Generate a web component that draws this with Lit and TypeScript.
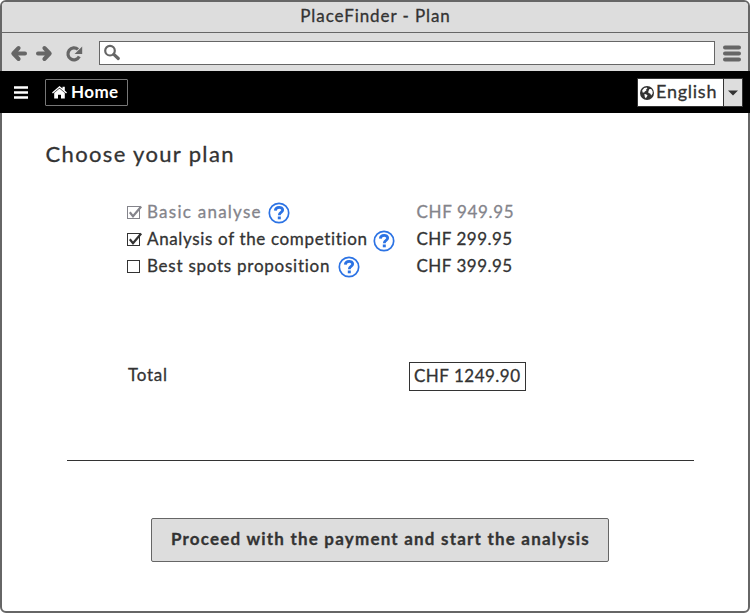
import { LitElement, html, css, svg } from "lit";
import { customElement } from "lit/decorators.js";

interface Option { label: string; price: string; checked: boolean; cls: string; }

const OPTIONS: Option[] = [
  { label: "Basic analyse", price: "CHF 949.95", checked: true, cls: "basic" },
  { label: "Analysis of the competition", price: "CHF 299.95", checked: true, cls: "competition" },
  { label: "Best spots proposition", price: "CHF 399.95", checked: false, cls: "spots" },
];

const arrow = svg`<path d="M7.6 2 L2.3 7.5 L7.6 13 M3 7.5 H14" fill="none" stroke="#666" stroke-width="4" stroke-linecap="round" stroke-linejoin="round"/>`;

@customElement("app-root")
export class AppRoot extends LitElement {
  static styles = css`
    :host { display: block; width: 750px; height: 613px; font-family: Lato, "Liberation Sans", sans-serif; font-size: 17px; line-height: 20px; color: #333; background: #fff; }
    * { box-sizing: border-box; }
    svg { display: block; flex: none; overflow: visible; }
    span { white-space: nowrap; -webkit-text-stroke: 0.3px currentColor; font-variant-ligatures: none; }
    .window { width: 750px; height: 613px; border: 2px solid #666; border-radius: 6px; background: #fff; }
    .chrome { background: #ddd; height: 69px; border-radius: 4px 4px 0 0; }
    .title { height: 31px; border-bottom: 1px solid #666; display: flex; align-items: center; justify-content: center; padding: 0 0 3px 1px; letter-spacing: .92px; }
    .toolbar { height: 38px; display: flex; align-items: center; padding: 2px 7px 0 9px; }
    .toolbar .fwd { margin-left: 9px; }
    .toolbar .reload { margin-left: 14px; }
    .address { width: 616px; height: 24px; margin-left: 17px; margin-right: 8px; border: 1px solid #666; background: #fff; display: flex; align-items: center; padding: 0 0 1px 4px; }
    .nav { height: 42px; margin: 0 -2px; background: #000; display: flex; align-items: center; padding: 0 7px 0 14px; }
    .burger { margin-top: 1px; }
    .home { margin-left: 17px; width: 83px; height: 27px; border: 1px solid #777; border-radius: 1px; color: #fff; display: flex; align-items: center; padding-left: 6px; gap: 4px; font-weight: 700; letter-spacing: .4px; }
    .home span { -webkit-text-stroke: 0; }
    .lang { margin: 1px 0 0 auto; width: 106px; height: 29px; background: #fff; border: 1px solid #333; display: flex; align-items: center; padding-left: 2px; gap: 2px; font-size: 18px; letter-spacing: .75px; }
    .lang span { padding-bottom: 3px; }
    .drop { margin-left: auto; width: 19px; height: 27px; background: #ddd; border-left: 1px solid #333; display: flex; align-items: center; justify-content: center; }
    h1 { margin: 28px 0 0 43.5px; font-weight: 400; font-size: 22px; line-height: 26px; letter-spacing: 1.34px; }
    .options { margin: 31px 0 0 125px; display: grid; grid-auto-rows: 27px; }
    .row { display: grid; grid-template-columns: 289.5px auto; align-items: center; }
    .choice { display: flex; align-items: center; }
    .box { margin-right: 6px; }
    .help { margin: 2px 0 0 8px; }
    .price { letter-spacing: .5px; }
    .basic { color: #84848b; }
    .basic .price { letter-spacing: .65px; }
    .basic .label { letter-spacing: 1.25px; }
    .basic .help { margin-left: 6.5px; }
    .competition .label { letter-spacing: .65px; }
    .competition .help { margin: 4px 0 0 5px; }
    .spots .label { letter-spacing: .75px; }
    .total { margin: 83px 0 0 125px; display: grid; grid-template-columns: 282px 117px; }
    .t-total { letter-spacing: .75px; padding: 3px 0 0 1px; }
    .sum { height: 29px; border: 1px solid #333; display: flex; align-items: center; padding: 0 0 2px 4px; letter-spacing: .5px; }
    .rule { margin: 69px 0 0 65px; width: 627px; height: 1px; background: #333; }
    .pay { margin: 57px 0 0 149px; width: 458px; height: 44px; border: 1px solid #666; border-radius: 2px; background: #ddd; font-weight: 700; display: flex; align-items: center; justify-content: center; letter-spacing: 1.2px; padding: 0 0 2px 1px; }
  `;
  check(o: Option) {
    const ink = o.cls === "basic" ? "#84848b" : "#333";
    return html`<svg class="box" width="14" height="14" viewBox="0 0 14 14"><rect x=".5" y="1.5" width="12" height="12" fill="none" stroke=${ink}/>${o.checked ? svg`<path d="M2.8 7.3 L6 11.2 L14.2 1.5" fill="none" stroke=${ink} stroke-width="2.2"/>` : ""}</svg>`;
  }
  render() {
    return html`<div class="window">
      <div class="chrome">
        <div class="title"><span>PlaceFinder - Plan</span></div>
        <div class="toolbar">
          <svg width="16" height="15" viewBox="0 0 16 15">${arrow}</svg>
          <svg class="fwd" width="16" height="15" viewBox="0 0 16 15"><g transform="matrix(-1 0 0 1 16 0)">${arrow}</g></svg>
          <svg class="reload" width="16" height="15" viewBox="0 0 16 15"><path d="M13.3 10.6 A6 6 0 1 1 12 3.4" fill="none" stroke="#666" stroke-width="3.2"/><path d="M16.2 .6 V8 H8.6z" fill="#666"/></svg>
          <div class="address"><svg width="16" height="15" viewBox="0 0 16 15"><circle cx="6" cy="5.7" r="4.8" fill="none" stroke="#666" stroke-width="2.2"/><path d="M9.8 9.3 L14.3 13.5" stroke="#666" stroke-width="3.2" stroke-linecap="round"/></svg></div>
          <svg width="18" height="17" viewBox="0 0 18 17"><path d="M2 2.5H16M2 8.5H16M2 14.5H16" stroke="#666" stroke-width="4" stroke-linecap="round"/></svg>
        </div>
      </div>
      <div class="nav">
        <svg class="burger" width="14" height="13" viewBox="0 0 14 13"><path d="M0 1.5H14M0 6.5H14M0 11.5H14" stroke="#fff" stroke-width="2.4"/></svg>
        <div class="home"><svg width="15" height="13" viewBox="0 0 15 13"><path d="M7.5 0 L10.5 2.6 V.8 H12.8 V4.6 L15 6.5 L14.1 7.5 L7.5 1.8 L.9 7.5 L0 6.5z M7.5 2.4 L12.8 7 V12.5 H9 V8.7 H6 V12.5 H2.2 V7z" fill="#fff"/></svg><span>Home</span></div>
        <div class="lang"><svg width="14" height="14" viewBox="0 0 14 14"><circle cx="7" cy="7" r="7" fill="#333"/><path d="M2.2 4.2 L4.2 2 L6.8 1.4 L7.4 2.4 L6.2 3.2 L6.4 4.4 L4.8 5.4 L4.2 6.6 L2.6 6.4z M4.4 8 L6 8.2 L7.6 9.4 L6.8 10.8 L5.8 12.2 L4.8 11z M9.4 3 L11.2 3 L12.6 5.2 L12.6 7.4 L11.2 9.4 L10.2 7.6 L8.4 6.9 L8.4 5.3z" fill="#fff"/></svg><span>English</span><div class="drop"><svg width="10" height="6" viewBox="0 0 10 6"><path d="M0 .5H10L5 5.5z" fill="#333"/></svg></div></div>
      </div>
      <h1><span>Choose your plan</span></h1>
      <div class="options">${OPTIONS.map(o => html`<div class="row ${o.cls}"><div class="choice">${this.check(o)}<span class="label">${o.label}</span><svg class="help" width="22" height="22" viewBox="0 0 22 22"><circle cx="11" cy="11" r="9.7" fill="none" stroke="#2c73e4" stroke-width="1.7"/><path d="M7.3 8.6 C7.7 4.2 14.7 4.4 14.7 8.1 C14.7 10.6 11.3 10.3 11.3 13.2" fill="none" stroke="#2c73e4" stroke-width="2.8"/><path d="M9.8 14.5h3v2.8h-3z" fill="#2c73e4"/></svg></div><span class="price">${o.price}</span></div>`)}</div>
      <div class="total"><span class="t-total">Total</span><div class="sum"><span>CHF 1249.90</span></div></div>
      <div class="rule"></div>
      <div class="pay"><span>Proceed with the payment and start the analysis</span></div>
    </div>`;
  }
}
